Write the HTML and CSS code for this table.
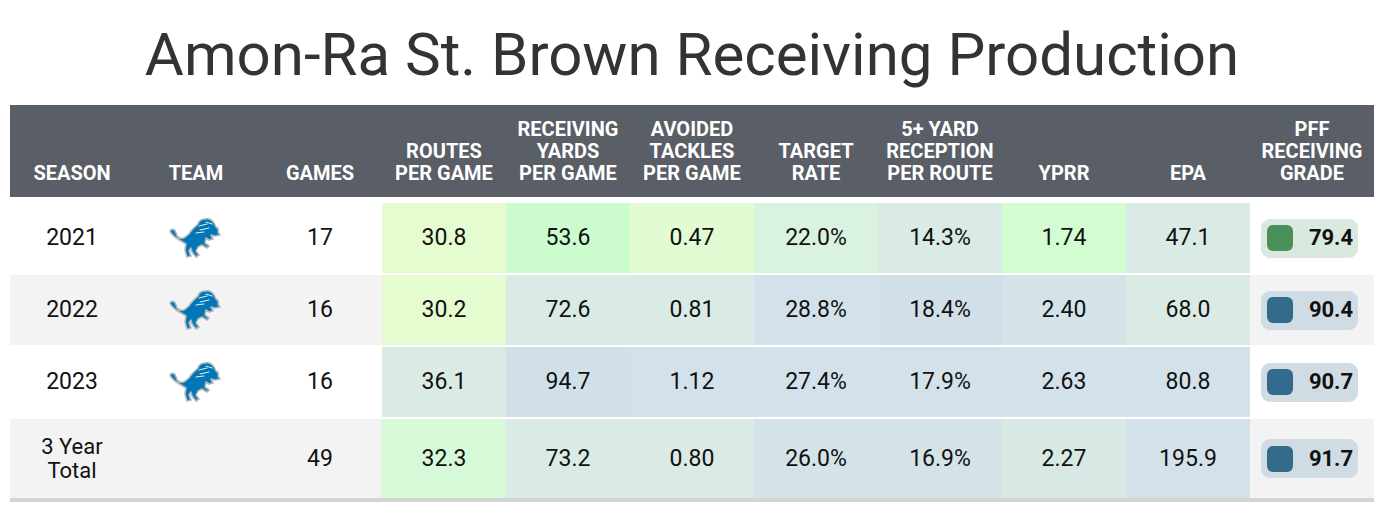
FILE: index.html
```html
<!DOCTYPE html>
<html lang="en">
<head>
<meta charset="utf-8">
<title>Amon-Ra St. Brown Receiving Production</title>
<link rel="stylesheet" href="styles.css">
</head>
<body>
<h1 class="title">Amon-Ra St. Brown Receiving Production</h1>
<div class="table">
  <div class="row head">
    <div class="hc">SEASON</div>
    <div class="hc">TEAM</div>
    <div class="hc">GAMES</div>
    <div class="hc">ROUTES<br>PER GAME</div>
    <div class="hc">RECEIVING<br>YARDS<br>PER GAME</div>
    <div class="hc">AVOIDED<br>TACKLES<br>PER GAME</div>
    <div class="hc">TARGET<br>RATE</div>
    <div class="hc">5+ YARD<br>RECEPTION<br>PER ROUTE</div>
    <div class="hc">YPRR</div>
    <div class="hc">EPA</div>
    <div class="hc">PFF<br>RECEIVING<br>GRADE</div>
  </div>

  <div class="row body first">
    <div class="c">2021</div>
    <div class="c"><svg class="lion" viewBox="0 0 52 40"><use href="#lion"/></svg></div>
    <div class="c">17</div>
    <div class="c y1">30.8</div>
    <div class="c g1">53.6</div>
    <div class="c y2">0.47</div>
    <div class="c t1">22.0%</div>
    <div class="c t2">14.3%</div>
    <div class="c g2">1.74</div>
    <div class="c t2">47.1</div>
    <div class="c"><span class="badge green"><i></i>79.4</span></div>
  </div>

  <div class="row body alt">
    <div class="c">2022</div>
    <div class="c"><svg class="lion" viewBox="0 0 52 40"><use href="#lion"/></svg></div>
    <div class="c">16</div>
    <div class="c y1">30.2</div>
    <div class="c t2">72.6</div>
    <div class="c t2">0.81</div>
    <div class="c b1">28.8%</div>
    <div class="c b2">18.4%</div>
    <div class="c b3">2.40</div>
    <div class="c t2">68.0</div>
    <div class="c"><span class="badge blue"><i></i>90.4</span></div>
  </div>

  <div class="row body">
    <div class="c">2023</div>
    <div class="c"><svg class="lion" viewBox="0 0 52 40"><use href="#lion"/></svg></div>
    <div class="c">16</div>
    <div class="c t2">36.1</div>
    <div class="c b2">94.7</div>
    <div class="c b1">1.12</div>
    <div class="c b1">27.4%</div>
    <div class="c b1">17.9%</div>
    <div class="c b1">2.63</div>
    <div class="c b1">80.8</div>
    <div class="c"><span class="badge blue"><i></i>90.7</span></div>
  </div>

  <div class="row body alt last">
    <div class="c two">3 Year<br>Total</div>
    <div class="c"></div>
    <div class="c">49</div>
    <div class="c g3">32.3</div>
    <div class="c t2">73.2</div>
    <div class="c t2">0.80</div>
    <div class="c b3">26.0%</div>
    <div class="c b3">16.9%</div>
    <div class="c t3">2.27</div>
    <div class="c b1">195.9</div>
    <div class="c"><span class="badge blue"><i></i>91.7</span></div>
  </div>
</div>

<svg class="defs" width="0" height="0" aria-hidden="true">
  <defs>
    <g id="lion">
      <path d="M1,13 C3,10 6,11 7,15 C8,19 11,21 15,20 L20,16 C22,12 26,9 29,6 C30,3 33,1 36,1 C40,0 43,2 45,5 L47,9 C49,10 50,12 49,14 L51,17 L46,18 L42,17 L44,21 L40,22 L37,20 L36,25 L40,28 L38,30 L33,27 L29,29 L27,33 L30,37 L27,39 L23,34 L22,30 L20,33 L22,38 L18,39 L16,32 L17,26 C14,24 10,22 6,19 C4,17 2,16 1,13 Z" fill="#0076b6" stroke="#b0b7bc" stroke-width="1.6" stroke-linejoin="round"/>
      <path d="M30,8 L38,6 M31,12 L40,10 M27,15 L35,14 M37,4 L43,6" stroke="#ffffff" stroke-width="0.9" fill="none" stroke-linecap="round"/>
    </g>
  </defs>
</svg>
</body>
</html>
```

FILE: styles.css
```css
* { box-sizing: border-box; }

body {
  margin: 0;
  background: #ffffff;
  font-family: Roboto, "Liberation Sans", sans-serif;
  color: #111111;
}

.title {
  margin: 0;
  padding: 20px 0 15px;
  height: 105px;
  font-size: 60px;
  line-height: 70px;
  font-weight: 400;
  color: #333333;
  text-align: center;
}

.table {
  width: 1364px;
  margin: 0 10px;
}

.row {
  display: grid;
  grid-template-columns: repeat(11, 124px);
}

.head {
  height: 92px;
  background: #5a5e66;
  color: #ffffff;
}

.hc {
  display: flex;
  align-items: flex-end;
  justify-content: center;
  text-align: center;
  padding-bottom: 13px;
  font-size: 20px;
  line-height: 22px;
  font-weight: 700;
}

.body {
  height: 70px;
  margin-top: 2px;
  background: #ffffff;
}

.body.first { margin-top: 6px; }
.body.alt { background: #f3f3f3; }
.body.last {
  height: 83px;
  border-bottom: 4px solid #d4d4d4;
}

.c {
  display: flex;
  align-items: center;
  justify-content: center;
  text-align: center;
  font-size: 23px;
  line-height: 26px;
  color: #111111;
}

.c.two {
  font-size: 22px;
  line-height: 24px;
}

.y1 { background: #e5fcd0; }
.y2 { background: #e2fbd2; }
.g1 { background: #ccfccd; }
.g2 { background: #d3fcd0; }
.g3 { background: #d6fad8; }
.t1 { background: #d9f3e0; }
.t2 { background: #d9ebe4; }
.t3 { background: #d8e8e5; }
.b1 { background: #d3e2ea; }
.b2 { background: #d1dfe9; }
.b3 { background: #d4e3e8; }

.lion {
  width: 52px;
  height: 40px;
  margin-left: -2px;
}

.badge {
  display: flex;
  align-items: center;
  gap: 16px;
  height: 39px;
  padding: 0 5px 0 6px;
  margin-left: -5px;
  border-radius: 9px;
  font-size: 22px;
  font-weight: 700;
  color: #111111;
}

.badge i {
  display: block;
  width: 26px;
  height: 26px;
  border-radius: 6px;
}

.badge.green { background: #d9e9de; }
.badge.green i { background: #4a9159; }
.badge.blue { background: #d0dce4; }
.badge.blue i { background: #336b8c; }

.defs { position: absolute; }
```
